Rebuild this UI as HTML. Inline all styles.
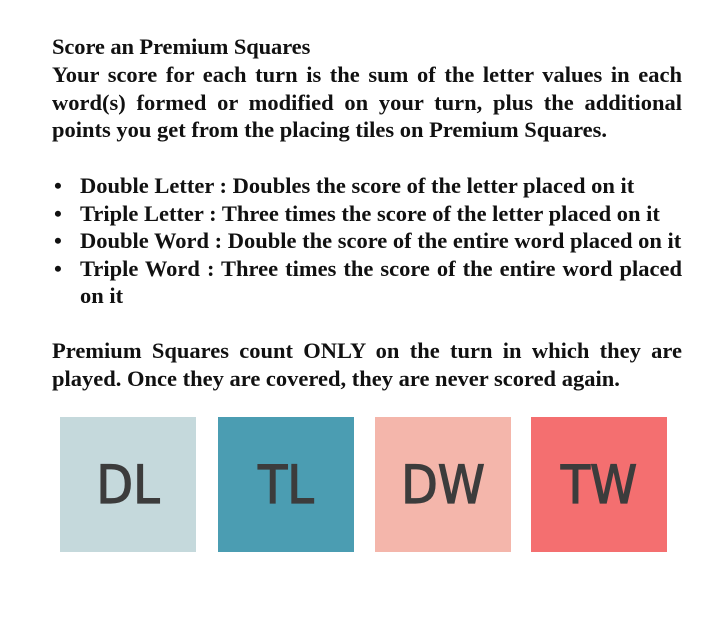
<!DOCTYPE html>
<html><head><style>
body{margin:0;background:#fff;width:722px;height:620px;overflow:hidden;font-family:"Liberation Serif",serif;font-weight:bold;color:#111;}
.t{position:absolute;left:52px;top:34px;font-size:22.5px;letter-spacing:-0.1px;line-height:26px}
.p{position:absolute;left:52px;width:630px;font-size:22.5px;line-height:27.5px;text-align:justify;}
ul{position:absolute;left:52px;top:172px;width:630px;margin:0;padding:0;list-style:none;font-size:22.5px;line-height:27.5px;}
li{position:relative;padding-left:28px;text-align:justify}
li:before{content:"•";position:absolute;left:2px}
.tile{position:absolute;top:417px;width:136px;height:135px;font-family:"DejaVu Sans Condensed","DejaVu Sans",sans-serif;font-weight:normal;color:#3c3c3c;font-size:53px;display:flex;align-items:center;justify-content:center;-webkit-text-stroke:1.2px #3c3c3c;padding-top:2px;box-sizing:border-box}
</style></head><body>
<div class="t">Score an Premium Squares</div>
<div class="p" style="top:61px">Your score for each turn is the sum of the letter values in each word(s) formed or modified on your turn, plus the additional points you get from the placing tiles on Premium Squares.</div>
<ul>
<li>Double Letter : Doubles the score of the letter placed on it</li>
<li>Triple Letter : Three times the score of the letter placed on it</li>
<li>Double Word : Double the score of the entire word placed on it</li>
<li>Triple Word : Three times the score of the entire word placed on it</li>
</ul>
<div class="p" style="top:337px">Premium Squares count ONLY on the turn in which they are played. Once they are covered, they are never scored again.</div>
<div class="tile" style="left:60px;background:#c5d9dc">DL</div>
<div class="tile" style="left:218px;background:#4b9db2">TL</div>
<div class="tile" style="left:375px;background:#f4b6ab">DW</div>
<div class="tile" style="left:531px;background:#f46f70">TW</div>
</body></html>
